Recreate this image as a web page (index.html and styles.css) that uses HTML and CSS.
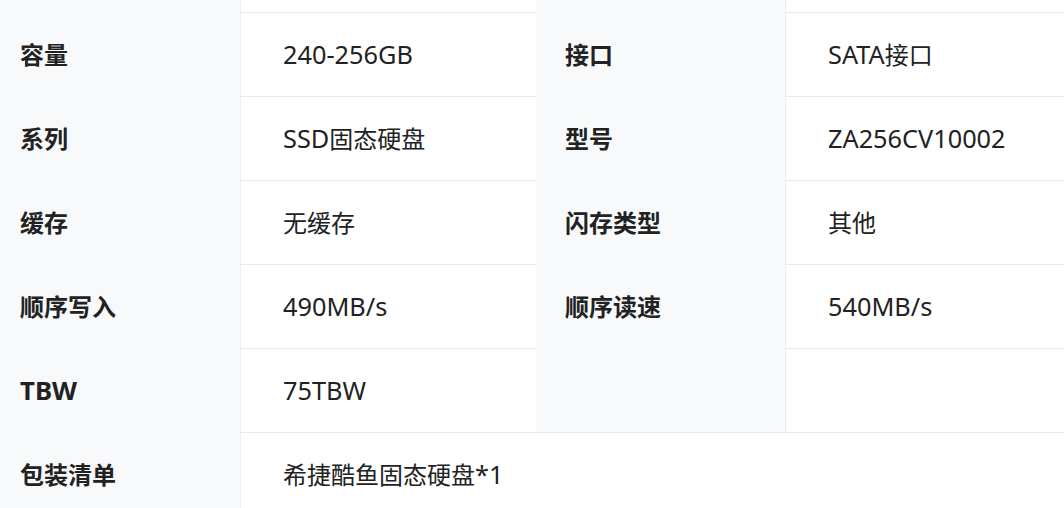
FILE: index.html
```html
<!DOCTYPE html>
<html lang="zh-CN">
<head>
<meta charset="utf-8">
<link rel="stylesheet" href="styles.css">
</head>
<body>
<div class="spec">
  <div class="cell label l1 top"></div>
  <div class="cell value v2 top"></div>
  <div class="cell label l3 top"></div>
  <div class="cell value v4 top"></div>

  <div class="cell label l1">容量</div>
  <div class="cell value v2"><span class="en">240-256GB</span></div>
  <div class="cell label l3">接口</div>
  <div class="cell value v4"><span class="en">SATA</span>接口</div>

  <div class="cell label l1">系列</div>
  <div class="cell value v2"><span class="en">SSD</span>固态硬盘</div>
  <div class="cell label l3">型号</div>
  <div class="cell value v4"><span class="en">ZA256CV10002</span></div>

  <div class="cell label l1">缓存</div>
  <div class="cell value v2">无缓存</div>
  <div class="cell label l3">闪存类型</div>
  <div class="cell value v4">其他</div>

  <div class="cell label l1">顺序写入</div>
  <div class="cell value v2"><span class="en">490MB/s</span></div>
  <div class="cell label l3">顺序读速</div>
  <div class="cell value v4"><span class="en">540MB/s</span></div>

  <div class="cell label l1"><span class="en">TBW</span></div>
  <div class="cell value v2"><span class="en">75TBW</span></div>
  <div class="cell label l3 closed"></div>
  <div class="cell value v4"></div>

  <div class="cell label l1">包装清单</div>
  <div class="cell value wide">希捷酷鱼固态硬盘<span class="en">*1</span></div>
</div>
</body>
</html>
```

FILE: styles.css
```css
html, body {
  margin: 0;
  padding: 0;
  background: #ffffff;
}

body {
  font-family: "Noto Sans", "Noto Sans CJK SC", sans-serif;
  color: #222222;
  overflow: hidden;
}

.spec {
  display: grid;
  grid-template-columns: 241px 295px 250px 1fr;
  grid-template-rows: 13px repeat(5, 84px) 84px;
}

.cell {
  display: flex;
  align-items: center;
  font-size: 24px;
  line-height: 1;
  box-sizing: border-box;
  white-space: pre;
}

.en {
  font-size: 25.3px;
}

.label {
  background: #f8f9fb;
  font-weight: 700;
  border-right: 1px solid #eceef1;
}

.label .en {
  font-size: 25.8px;
}

.l1 {
  padding-left: 20px;
}

.l3 {
  padding-left: 29px;
}

.value {
  border-bottom: 1px solid #ebebeb;
}

.v2 {
  padding-left: 42px;
}

.v4 {
  padding-left: 42px;
}

.label.closed {
  border-bottom: 1px solid #ebebeb;
}

.wide {
  grid-column: 2 / 5;
  padding-left: 42px;
  border-bottom: none;
}
```
